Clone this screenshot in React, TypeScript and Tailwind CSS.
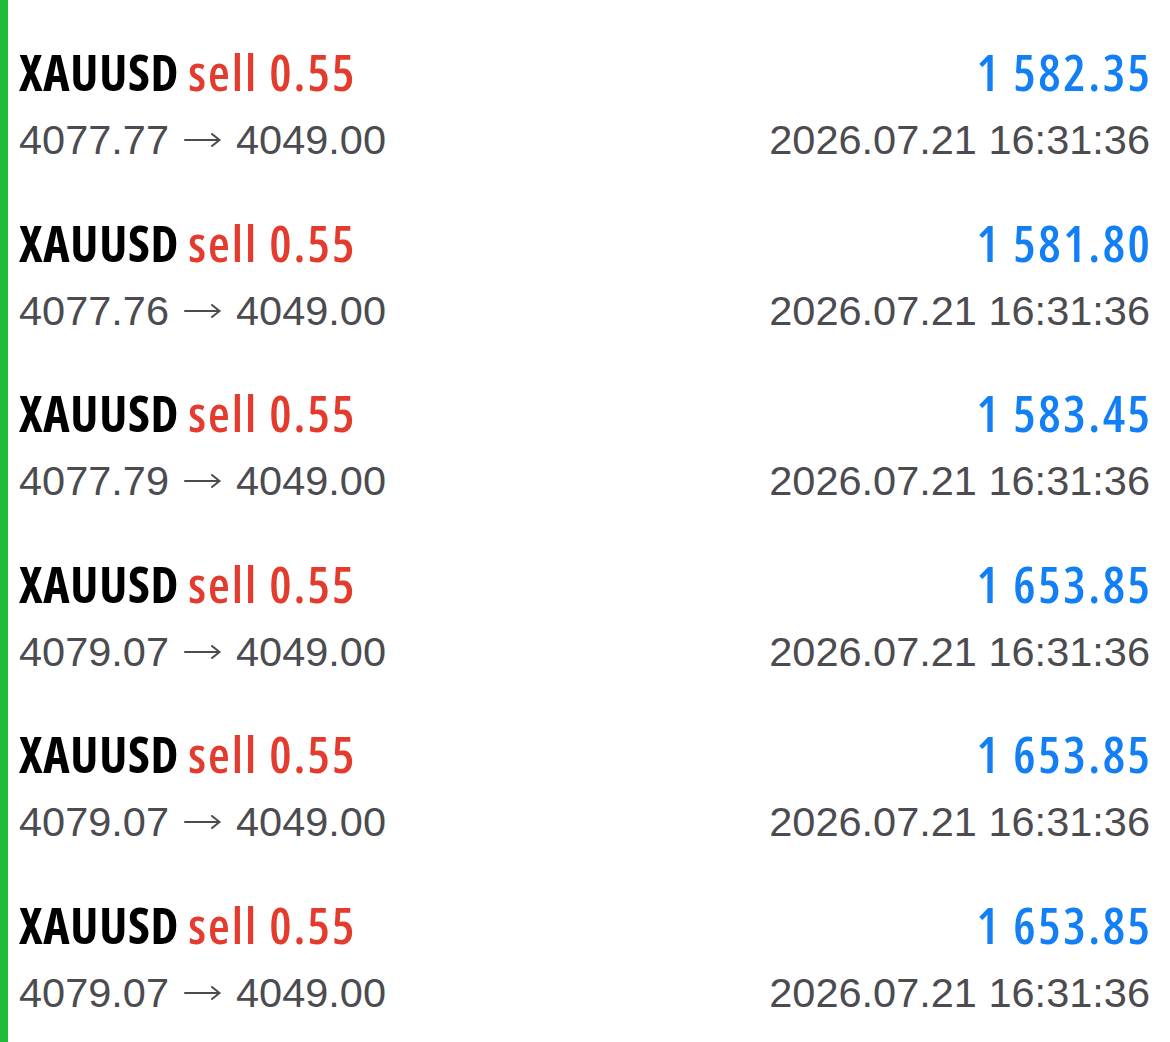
import React from "react";

const rows = [
  { open: "4077.77", pnl: "1 582.35" },
  { open: "4077.76", pnl: "1 581.80" },
  { open: "4077.79", pnl: "1 583.45" },
  { open: "4079.07", pnl: "1 653.85" },
  { open: "4079.07", pnl: "1 653.85" },
  { open: "4079.07", pnl: "1 653.85" },
];

function Arrow() {
  return (
    <svg
      width="37"
      height="14"
      viewBox="0 0 37 14"
      className="block mx-[15px]"
      fill="none"
      stroke="#4b4b50"
      strokeWidth="2"
      strokeLinecap="round"
      strokeLinejoin="round"
    >
      <path d="M1 7H35.5" />
      <path d="M28 1L35.5 7L28 13" />
    </svg>
  );
}

export default function App() {
  return (
    <div className="w-[1170px] h-[1042px] bg-white flex overflow-hidden">
      <div className="w-[8px] bg-[#1fbb3b] shrink-0" />
      <div className="flex-1 pl-[11px] pr-[20px] pt-[47px] flex flex-col gap-[52.6px]">
        {rows.map((r, i) => (
          <div key={i} className="flex flex-col gap-[18px]">
            <div className="flex justify-between items-center h-[50px] text-[50px] leading-[50px] font-['Open_Sans',sans-serif] [font-stretch:75%]">
              <div className="flex gap-[9px]">
                <span className="text-black font-bold tracking-[0.7px]">XAUUSD</span>
                <span className="text-[#e43b2f] font-semibold tracking-[2px]">sell 0.55</span>
              </div>
              <div className="font-semibold text-[#137ff4] tracking-[2.6px] -mr-[2.6px]">{r.pnl}</div>
            </div>
            <div className="flex justify-between items-center h-[50px] text-[41.5px] leading-[50px] text-[#4b4b50] font-['Liberation_Sans',Arial,sans-serif]">
              <div className="flex items-center">
                <span>{r.open}</span>
                <Arrow />
                <span>4049.00</span>
              </div>
              <div>2026.07.21 16:31:36</div>
            </div>
          </div>
        ))}
      </div>
    </div>
  );
}
